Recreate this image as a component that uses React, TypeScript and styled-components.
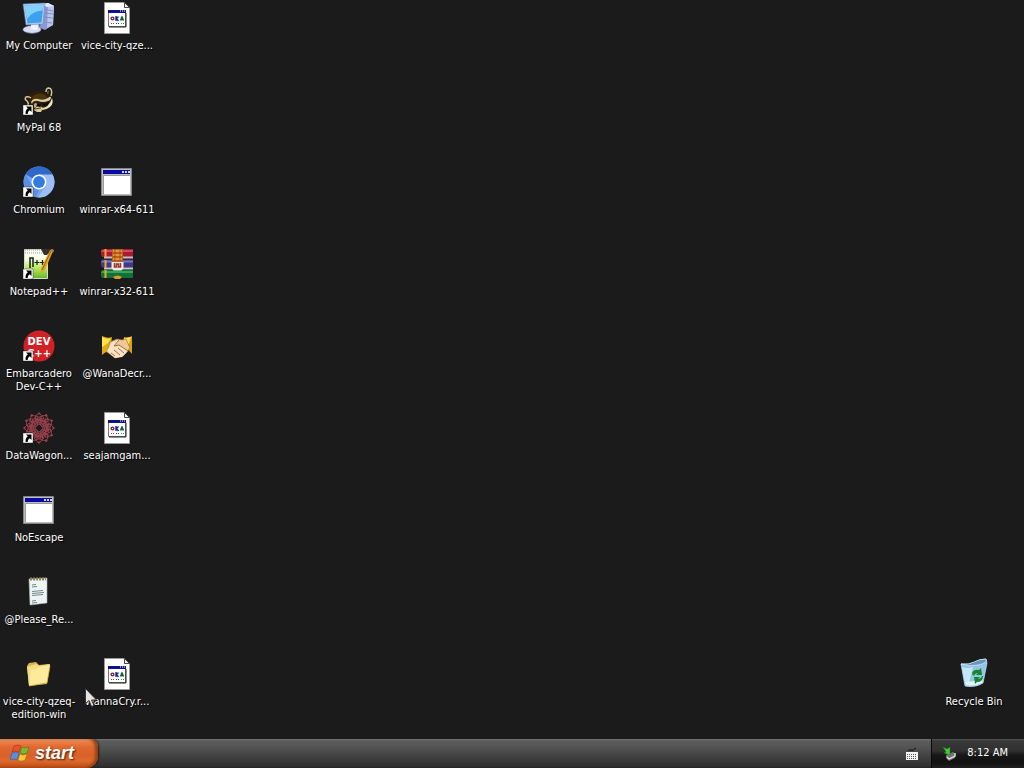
import React from "react";
import styled, { createGlobalStyle } from "styled-components";

const GlobalStyle = createGlobalStyle`
  html, body { margin: 0; padding: 0; background: #1b1b1b; }
  * { box-sizing: border-box; }
  button { font: inherit; color: inherit; border: 0; padding: 0; background: none; }
`;

const uiFont = `Tahoma, "DejaVu Sans Condensed", "DejaVu Sans", sans-serif`;

const Screen = styled.div`
  display: flex;
  flex-direction: column;
  min-height: 100vh;
  background: #1b1b1b;
  color: #fff;
  font-family: ${uiFont};
  font-size: 11px;
  line-height: 13px;
`;

const Desktop = styled.main`
  flex: 1;
  display: grid;
  grid-template-columns: 78px 78px 1fr 78px;
  grid-template-rows: repeat(9, 72px);
  row-gap: 10px;
  padding: 2px 11px 0 0;
`;

const Shortcut = styled.button<{ $col: number; $row: number }>`
  grid-column: ${(p) => p.$col};
  grid-row: ${(p) => p.$row};
  position: relative;
  display: flex;
  flex-direction: column;
  align-items: center;
  justify-content: flex-start;
  gap: 5px;
`;

const Label = styled.span`
  display: flex;
  flex-direction: column;
  align-items: center;
  white-space: nowrap;
  text-shadow: 1px 1px 1px #000;
`;

const Glyph = styled.svg`
  display: block;
  width: 32px;
  height: 32px;
  overflow: visible;
`;

const Pointer = styled.svg`
  position: absolute;
  left: 7px;
  top: 30px;
  width: 12px;
  height: 19px;
`;

const Taskbar = styled.footer`
  display: flex;
  height: 29px;
  background: linear-gradient(#737373 0, #5c5c5c 2px, #545454 8px, #484848 14px, #3c3c3c 20px, #303030 27px, #242424 29px);
`;

const StartButton = styled.button`
  display: flex;
  align-items: center;
  gap: 5px;
  width: 98px;
  padding: 0 0 2px 10px;
  border-radius: 0 8px 12px 0;
  background: linear-gradient(#f3a274 0, #ea7e48 3px, #e06a30 8px, #d9602a 16px, #dd6a2c 22px, #b84a16 29px);
  box-shadow: inset -3px 0 3px #98400f, 1px 0 2px #222;
  font-family: "Liberation Sans", Arial, sans-serif;
  font-size: 18px;
  line-height: 20px;
  font-weight: bold;
  font-style: italic;
  text-shadow: 1px 1px 2px #4a1c04;
`;

const TaskArea = styled.div`
  flex: 1;
  display: flex;
  align-items: center;
  justify-content: flex-end;
  padding-right: 12px;
`;

const Tray = styled.div`
  display: flex;
  align-items: center;
  gap: 10px;
  padding: 0 16px 2px 10px;
  border-left: 1px solid #080808;
  background: linear-gradient(#555 0, #393939 2px, #303030 12px, #181818 16px, #111 23px, #1f1f1f 29px);
`;

const TrayButton = styled.button`
  display: block;
  line-height: 0;
`;

const ShortcutArrow = () => (
  <g>
    <path d="M0 21h10v10H0z" fill="#fff" stroke="#111" strokeWidth=".4" />
    <path d="M3 22.500h5.500V28L6.800 26.300Q4.600 27.500 4.600 30H2.700Q2 26.500 4.800 24.300z" fill="#000" />
  </g>
);

const ComputerIcon = () => (
  <Glyph viewBox="0 0 32 32">
    <path d="M18 2l7-1 6 3-1 19-8 5-5-2z" fill="#8b9bd0" />
    <path d="M25 1l6 3-1 19-6 3z" fill="#b8c6ee" />
    <path d="M21 7l9 2M21 11l9 1M21 15l9 1M21 20l8 1" stroke="#7f8fc6" />
    <path d="M18 2l7-1 6 3-7 1z" fill="#e3e9fc" />
    <path d="M8 21l8 0 1 5H8z" fill="#a9b4da" />
    <ellipse cx="9" cy="27.500" rx="9" ry="3.700" fill="#d5dcf4" stroke="#8d9bc9" strokeWidth=".6" />
    <path d="M8 22l7-1 0 6q-3 2-7 0z" fill="#eef2ff" />
    <path d="M0 2l22-1-2 21-17 1z" fill="#b4c9ee" stroke="#6280b8" strokeWidth=".5" />
    <path d="M1.500 3.500l19-1-2 18-14 1z" fill="#3da2ee" />
    <path d="M1.500 3.500l19-1-1 6Q9 9 4 17z" fill="#83d0fd" />
  </Glyph>
);

const RarFileIcon = () => (
  <Glyph viewBox="0 0 32 32">
    <path d="M3.500.5h20l5 5v26h-25z" fill="#fff" stroke="#999" />
    <path d="M23.500.5v5h5z" fill="#eee" stroke="#444" />
    <path d="M7.500 9.500h17v15h-17z" fill="#fff" stroke="#777" />
    <path d="M7 8h18v3H7z" fill="#10108a" />
    <path d="M19 9h1M21 9h1M23 9h1" stroke="#fff" />
    <path d="M25 11v14H8" stroke="#222" fill="none" />
    <circle cx="11.500" cy="16.500" r="1.400" fill="none" stroke="#8c1838" strokeWidth="1.400" />
    <path d="M15 14v5M17.500 14.500l-2 2 2 2.500" stroke="#102c90" strokeWidth="1.400" fill="none" />
    <path d="M21 14.500l1.500 4M21 14.500l-1.500 4M20 17.500h2" stroke="#106040" strokeWidth="1.400" fill="none" />
    <path d="M10 21.500h1M12 21.500h1" stroke="#d33" />
    <path d="M15 21.500h1M17 21.500h1" stroke="#33c" />
    <path d="M20 21.500h1M22 21.500h1" stroke="#2a3" />
  </Glyph>
);

const RaccoonIcon = () => (
  <Glyph viewBox="0 0 32 32">
    <path d="M5 12Q11 5 21 8l6 4 1 8-5 7-13 1-5-8z" fill="#2b1e0a" />
    <path d="M9 13Q15 7 22 11l3 3-8 3-7 1z" fill="#4a330d" />
    <path d="M23 8q0-4 3-4 4 1 2 8" fill="#1d150b" stroke="#d2c59d" strokeWidth="1.500" />
    <path d="M25 10q-1-3 1-3" fill="none" stroke="#8f7b4a" />
    <path d="M8 14Q6 12 3 13q-2 2 1 4 2 2 1 4" fill="none" stroke="#d2c59d" strokeWidth="1.500" />
    <path d="M8 18q2-4 7-3 5 2 10-1 2-2 3-1 0 3-3 4-5 2-10 0-5-1-6 3z" fill="#d9cca4" />
    <path d="M29 14q2 6-2 9-4 3-8 3l-1-2q8 0 11-10z" fill="#efe4c1" />
    <path d="M18 19q4 2 8-1-1 4-5 4z" fill="#0e0a06" />
    <path d="M11 20q2-2 3 0l-1 3-2 1z" fill="#b9a87b" />
    <path d="M13 23q4-2 7 1l-2 4h-4l-3-2z" fill="#d8caa3" />
    <path d="M15 20l3 1-1 2-3-1z" fill="#090807" />
    <path d="M12 25l6-1" stroke="#4b3818" />
    <ShortcutArrow />
  </Glyph>
);

const ChromiumIcon = () => (
  <Glyph viewBox="0 0 32 32">
    <circle cx="16" cy="16" r="15.500" fill="#78a5ef" />
    <path d="M16 16L2.600 8.300A15.500 15.500 0 0 1 29.500 8.500z" fill="#2f68c8" />
    <path d="M16 8.500h13.500A15.500 15.500 0 0 1 15 31.500L22.500 20z" fill="#9dbdf6" />
    <path d="M2.600 8.300L9.500 20l6.500 4-3 7A15.500 15.500 0 0 1 2.600 8.300z" fill="#5a90e4" />
    <circle cx="16" cy="16" r="7.500" fill="#fff" />
    <circle cx="16" cy="16" r="5.900" fill="#347be0" />
    <ShortcutArrow />
  </Glyph>
);

const WindowIcon = () => (
  <Glyph viewBox="0 0 32 32">
    <path d="M.5 2.500h30v27H.5z" fill="#bdbdbd" stroke="#858585" />
    <path d="M2 4h27v4H2z" fill="#0909a6" />
    <path d="M21 5h2v2h-2zM24 5h2v2h-2zM27 5h2v2h-2z" fill="#d9d9d9" />
    <path d="M3 9h26v19H3z" fill="#fff" />
    <path d="M2.500 28V9.500H29" stroke="#999" fill="none" />
  </Glyph>
);

const NotepadPlusIcon = () => (
  <Glyph viewBox="0 0 32 32">
    <defs>
      <linearGradient id="npp" x1="0" y1="0" x2="0" y2="1">
        <stop offset=".3" stopColor="#fafff0" />
        <stop offset=".6" stopColor="#c3ea70" />
        <stop offset="1" stopColor="#62b91e" />
      </linearGradient>
    </defs>
    <path d="M1.500 1.500h19l4 5v24h-23z" fill="url(#npp)" stroke="#d8d8d8" />
    <path d="M2 2h17M2 5h18" stroke="#999" strokeDasharray="1 1" />
    <path d="M18 1h9l-3 6h-3z" fill="#303030" />
    <path d="M7 20V10h3v9" fill="none" stroke="#14200e" strokeWidth="1.500" />
    <path d="M11.500 14.500h5M14 12v5M17 14.500h5M19.500 12v5" fill="none" stroke="#14200e" strokeWidth="1.200" />
    <path d="M27 2l3 1-8 19-4 4 0-6z" fill="#e6a51f" />
    <path d="M28 3L19 22" stroke="#9b6313" />
    <path d="M27 2l2-1 2 1-1 3z" fill="#b78351" />
    <ShortcutArrow />
  </Glyph>
);

const WinrarIcon = () => (
  <Glyph viewBox="0 0 32 32">
    <path d="M1 1h31v8H1L0 7V3z" fill="#a51c34" />
    <path d="M1 2h31v2H0z" fill="#d8475f" />
    <path d="M3 8.500h29v2H3z" fill="#cdbcbf" />
    <path d="M1 11.500h31v8H1l-1-2v-4z" fill="#403b86" />
    <path d="M1 12.500h31v2H0z" fill="#7874bd" />
    <path d="M3 19.500h29v2H3z" fill="#c8c5d2" />
    <path d="M1 22h31v8H1l-1-2v-4z" fill="#12703a" />
    <path d="M1 23h31v2H0z" fill="#38a45a" />
    <path d="M4.500 1v8M4.500 12v8M4.500 22v8" stroke="#f0a829" strokeWidth="2" />
    <path d="M11 1h11v13H11z" fill="#b9601a" />
    <path d="M12 3h9M12 7h9M12 11h9" stroke="#f0a448" strokeWidth="1.500" />
    <path d="M14 1v12M19 1v12" stroke="#8d4210" strokeWidth=".7" />
    <path d="M10.500 14h12v6l-2 2.500h-8l-2-2.500z" fill="#f3ebe5" />
    <path d="M13.500 15v4h2v-3h2v3h2v-4" stroke="#9d3322" strokeWidth="1.500" fill="none" />
    <path d="M12 29q5-3 9 0l-2 2h-5z" fill="#d99a2b" />
  </Glyph>
);

const DevIcon = () => (
  <Glyph viewBox="0 0 32 32">
    <circle cx="16" cy="16" r="15.500" fill="#cf2126" />
    <g fontFamily="DejaVu Sans, sans-serif" fontSize="10" fontWeight="700" fill="#fff" textAnchor="middle">
      <text x="16" y="15">DEV</text>
      <text x="16" y="27">C++</text>
    </g>
    <ShortcutArrow />
  </Glyph>
);

const HandshakeIcon = () => (
  <Glyph viewBox="0 0 32 32">
    <path d="M1 6q6 3 10 1l-2 15q-4-1-8 3z" fill="#dcae14" />
    <path d="M31 6q-5 3-8 1l-2 11q6 0 10 6z" fill="#d8a512" />
    <path d="M1 7q5 3 9 1l-3 5-6 4z" fill="#ffe34b" />
    <path d="M30 7l-7 1 0 4 5 2z" fill="#fce04b" />
    <path d="M9 12l7-3 5 1 4-1 4 9-7 8-8 2-8-6z" fill="#efc99a" stroke="#a87643" strokeWidth=".7" />
    <path d="M6 21l5-9 7-2-5 7 5-1 9 5-6 6-7 1z" fill="#fbe2c2" />
    <path d="M18 10l-5 6 5-1 9 6M17 18l6 5M13 20l6 5M10 23l4 3" stroke="#895a31" strokeWidth=".8" fill="none" />
  </Glyph>
);

const petals = Array.from({ length: 12 }, (_, i) => i * 30);

const RosetteIcon = () => (
  <Glyph viewBox="0 0 32 32">
    <g fill="none" stroke="#96404c" strokeWidth=".9">
      {petals.map((angle) => (
        <g key={angle} transform={`rotate(${angle} 16 16)`}>
          <path d="M16 13L11 6l5-5 5 5zM11 6l11 4M21 6l-11 4M13 12l7-9" />
          <circle cx="16" cy="1.500" r=".8" fill="#a84452" />
        </g>
      ))}
      <circle cx="16" cy="16" r="6" />
    </g>
    <ShortcutArrow />
  </Glyph>
);

const TextFileIcon = () => (
  <Glyph viewBox="0 0 32 32">
    <path d="M6 3l18-1v25L7 29z" fill="#edf4f4" stroke="#a5b4b6" strokeWidth=".6" />
    <path d="M7 3h16" stroke="#8c8751" strokeWidth="3" strokeDasharray="2 1" />
    <path d="M9 9l4-.5M9 11l5-.5M9 15.500l11-1M9 17.500l12-1M9 19.500l11-1M9 25l4-.5M9 27l5-.5" stroke="#566a72" strokeWidth=".8" />
  </Glyph>
);

const FolderIcon = () => (
  <Glyph viewBox="0 0 32 32">
    <path d="M4 8l2-3 7-1 3 3 10-1 1 3-3 17-18 2z" fill="#dcb452" />
    <path d="M4 9l9-3 3 2 11-2-3 19L6 28z" fill="#f3dc82" />
    <path d="M8 12l6-1 2-2 11-2-3 17L6 28z" fill="#fdeb9b" />
    <path d="M6 28L24 25l3-17" fill="none" stroke="#c1983b" strokeWidth=".7" />
  </Glyph>
);

const RecycleIcon = () => (
  <Glyph viewBox="0 0 32 32">
    <path d="M3 6Q12 7 17 4T28 1l1 4-4 20q-8 5-18 3z" fill="#94c4e6" stroke="#cfeafa" strokeWidth=".7" />
    <path d="M3 6q8 1 13-2T28 1q2 4-8 6-9 2-17-1z" fill="#6796bb" stroke="#d8effc" strokeWidth=".7" />
    <path d="M4 9q6 2 11 0l-4 17-4-1z" fill="#c6e7fa" />
    <path d="M7 24q8 0 18-4l-1 5q-8 4-16 2z" fill="#e0f5fd" />
    <path d="M14 16q1-5 7-4l2-2 1 7h-6l2-2q-3 0-4 3zM25 18q0 6-6 6l-2 2-1-7h6l-2 2q3 0 4-3z" fill="#168728" />
  </Glyph>
);

type Item = { col: number; row: number; lines: string[]; Icon: () => React.JSX.Element; pointed?: boolean };

const items: Item[] = [
  { col: 1, row: 1, lines: ["My Computer"], Icon: ComputerIcon },
  { col: 1, row: 2, lines: ["MyPal 68"], Icon: RaccoonIcon },
  { col: 1, row: 3, lines: ["Chromium"], Icon: ChromiumIcon },
  { col: 1, row: 4, lines: ["Notepad++"], Icon: NotepadPlusIcon },
  { col: 1, row: 5, lines: ["Embarcadero", "Dev-C++"], Icon: DevIcon },
  { col: 1, row: 6, lines: ["DataWagon..."], Icon: RosetteIcon },
  { col: 1, row: 7, lines: ["NoEscape"], Icon: WindowIcon },
  { col: 1, row: 8, lines: ["@Please_Re..."], Icon: TextFileIcon },
  { col: 1, row: 9, lines: ["vice-city-qzeq-", "edition-win"], Icon: FolderIcon },
  { col: 2, row: 1, lines: ["vice-city-qze..."], Icon: RarFileIcon },
  { col: 2, row: 3, lines: ["winrar-x64-611"], Icon: WindowIcon },
  { col: 2, row: 4, lines: ["winrar-x32-611"], Icon: WinrarIcon },
  { col: 2, row: 5, lines: ["@WanaDecr..."], Icon: HandshakeIcon },
  { col: 2, row: 6, lines: ["seajamgam..."], Icon: RarFileIcon },
  { col: 2, row: 9, lines: ["WannaCry.r..."], Icon: RarFileIcon, pointed: true },
  { col: 4, row: 9, lines: ["Recycle Bin"], Icon: RecycleIcon },
];

export default function App() {
  return (
    <Screen>
      <GlobalStyle />
      <Desktop>
        {items.map(({ col, row, lines, Icon, pointed }) => (
          <Shortcut key={`${col}-${row}`} $col={col} $row={row}>
            <Icon />
            <Label>
              {lines.map((line) => (
                <span key={line}>{line}</span>
              ))}
            </Label>
            {pointed && (
              <Pointer viewBox="0 0 12 19" aria-hidden="true">
                <path d="M.5.5v15l3.500-3 2.500 6 2.500-1-2.500-5.500h5z" fill="#e4e4e4" stroke="#333" />
              </Pointer>
            )}
          </Shortcut>
        ))}
      </Desktop>
      <Taskbar>
        <StartButton>
          <svg width="20" height="18" viewBox="0 0 20 18" aria-hidden="true">
            <path d="M4 2q4-2 7 0L9 8Q6 6 2 8z" fill="#e9502b" stroke="#8e3413" strokeWidth=".5" />
            <path d="M12 3q3 2 7 0l-2 6q-4 2-7 0z" fill="#75bd2c" stroke="#50701a" strokeWidth=".5" />
            <path d="M2 9q4-2 7 0l-2 7q-3-2-7 0z" fill="#5c8ee0" stroke="#3b4f88" strokeWidth=".5" />
            <path d="M10 10q3 2 7 0l-2 6q-4 2-7 0z" fill="#f6cb35" stroke="#94711c" strokeWidth=".5" />
          </svg>
          start
        </StartButton>
        <TaskArea>
          <TrayButton aria-label="Keyboard">
            <svg width="14" height="14" viewBox="0 0 14 14">
              <path d="M3 4q1-2 3-1t5-2" stroke="#111" fill="none" />
              <path d="M1 5h12v8H1z" fill="#f4f4f4" />
              <path d="M2 7.500h10M2 9.500h10M2 11.500h10" stroke="#555" strokeDasharray="1 1" />
            </svg>
          </TrayButton>
        </TaskArea>
        <Tray>
          <TrayButton aria-label="Safely remove hardware">
            <svg width="15" height="16" viewBox="0 0 15 16">
              <path d="M4 10l7-3 3 2-1 4-6 3-3-3z" fill="#6f7773" />
              <path d="M5 12l2 2 6-3 0-3" fill="none" stroke="#dfe6e2" strokeWidth="1.300" />
              <path d="M1 2l4 2 3-2 0 8-6-2 2-1z" fill="#43c93a" stroke="#187716" strokeWidth=".5" />
            </svg>
          </TrayButton>
          <span>8:12 AM</span>
        </Tray>
      </Taskbar>
    </Screen>
  );
}
